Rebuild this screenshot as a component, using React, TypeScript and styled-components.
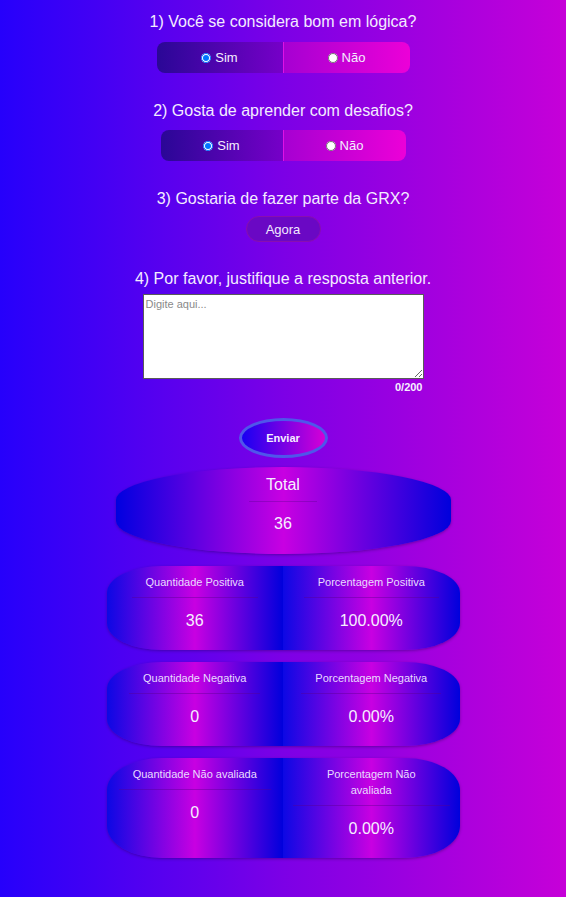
import styled, {createGlobalStyle} from 'styled-components'
import {useState} from 'react'

const GlobalStyle = createGlobalStyle`
  html, body {
    margin: 0;
    min-height: 100%;
  }
  body {
    min-height: 100vh;
    background: linear-gradient(90deg, #2600fb 0%, #7c00e6 50%, #c600d8 100%);
    font-family: "Liberation Sans", Arial, sans-serif;
    color: #f2eaff;
  }
`

interface StatCell {
  label: string
  value: string
}

const stats: [StatCell, StatCell][] = [
  [
    {label: 'Quantidade Positiva', value: '36'},
    {label: 'Porcentagem Positiva', value: '100.00%'},
  ],
  [
    {label: 'Quantidade Negativa', value: '0'},
    {label: 'Porcentagem Negativa', value: '0.00%'},
  ],
  [
    {label: 'Quantidade Não avaliada', value: '0'},
    {label: 'Porcentagem Não avaliada', value: '0.00%'},
  ],
]

const YesNo = ({name, width}: {name: string; width: number}) => (
  <Toggle $width={width}>
    <ToggleOption $side="left">
      <input type="radio" name={name} defaultChecked />
      Sim
    </ToggleOption>
    <ToggleOption $side="right">
      <input type="radio" name={name} />
      Não
    </ToggleOption>
  </Toggle>
)

export default function App() {
  const [text, setText] = useState('')

  return (
    <Page>
      <GlobalStyle />

      <Question $top={0} $gap={11}>1) Você se considera bom em lógica?</Question>
      <YesNo name="logica" width={253} />

      <Question $top={29} $gap={10}>2) Gosta de aprender com desafios?</Question>
      <YesNo name="desafios" width={245} />

      <Question $top={29} $gap={8}>3) Gostaria de fazer parte da GRX?</Question>
      <NowButton type="button">Agora</NowButton>

      <Question $top={28} $gap={6}>4) Por favor, justifique a resposta anterior.</Question>
      <AnswerBox>
        <TextArea
          placeholder="Digite aqui..."
          maxLength={200}
          value={text}
          onChange={(e) => setText(e.target.value)}
        />
        <Counter>{text.length}/200</Counter>
      </AnswerBox>

      <SendButton type="button">Enviar</SendButton>

      <TotalCard>
        <TotalTitle>Total</TotalTitle>
        <TotalValue>36</TotalValue>
      </TotalCard>

      <StatList>
        {stats.map((row) => (
          <StatRow key={row[0].label}>
            {row.map((cell) => (
              <StatHalf key={cell.label}>
                <StatLabel>{cell.label}</StatLabel>
                <StatValue>{cell.value}</StatValue>
              </StatHalf>
            ))}
          </StatRow>
        ))}
      </StatList>
    </Page>
  )
}

const Page = styled.main`
  display: flex;
  flex-direction: column;
  align-items: center;
  padding: 13px 0 40px;
`

const Question = styled.h2<{$top: number; $gap: number}>`
  margin: ${(p) => p.$top}px 0 ${(p) => p.$gap}px;
  font-size: 16px;
  font-weight: 400;
  line-height: 18px;
  color: #f3ecff;
`

const Toggle = styled.div<{$width: number}>`
  display: flex;
  width: ${(p) => p.$width}px;
  height: 31px;
  border-radius: 8px;
  overflow: hidden;
`

const ToggleOption = styled.label<{$side: 'left' | 'right'}>`
  display: flex;
  flex: 1;
  align-items: center;
  justify-content: center;
  gap: 4px;
  font-size: 13px;
  color: #f4eeff;
  cursor: pointer;
  background: ${(p) =>
    p.$side === 'left'
      ? 'linear-gradient(90deg, #2a0796, #7600c8)'
      : 'linear-gradient(90deg, #a600d2, #ec00d8)'};
  border-left: ${(p) => (p.$side === 'right' ? '1px solid #e010e6' : '0')};

  input {
    width: 10px;
    height: 10px;
    margin: 0;
  }
`

const NowButton = styled.button`
  width: 75px;
  height: 26px;
  border: 1px solid #8a0eb0;
  border-radius: 13px;
  background: #6a08c4;
  color: #f2eaff;
  font-family: inherit;
  font-size: 13px;
  cursor: pointer;
`

const AnswerBox = styled.div`
  display: flex;
  flex-direction: column;
  align-items: flex-end;
  width: 281px;
`

const TextArea = styled.textarea`
  box-sizing: border-box;
  width: 281px;
  height: 85px;
  margin: 0;
  padding: 3px 2px;
  border: 1px solid #5a5a5a;
  font-family: "Liberation Sans", Arial, sans-serif;
  font-size: 11px;
  resize: both;

  &::placeholder {
    color: #8a8a8a;
  }
`

const Counter = styled.span`
  margin: 2px 1px 0 0;
  font-size: 11px;
  font-weight: 700;
  line-height: 13px;
  color: #f6f0ff;
`

const SendButton = styled.button`
  box-sizing: border-box;
  width: 89px;
  height: 40px;
  margin-top: 24px;
  border: 3px solid #4f56ea;
  border-radius: 50%;
  background: linear-gradient(90deg, #1800f2, #d600d6);
  color: #f6eeff;
  font-family: inherit;
  font-size: 11px;
  font-weight: 700;
  cursor: pointer;
`

const TotalCard = styled.section`
  display: flex;
  flex-direction: column;
  align-items: center;
  box-sizing: border-box;
  width: 335px;
  height: 87px;
  margin-top: 9px;
  padding-top: 9px;
  border-radius: 50% / 38%;
  background: linear-gradient(90deg, #0000e0, #c800e2 50%, #0000dc);
  box-shadow: 0 1px 3px rgba(40, 0, 90, 0.45);
`

const TotalTitle = styled.h3`
  margin: 0;
  padding: 0 17px 7px;
  border-bottom: 1px solid rgba(90, 0, 140, 0.35);
  font-size: 16px;
  font-weight: 400;
  line-height: 18px;
  color: #f6efff;
`

const TotalValue = styled.p`
  margin: 13px 0 0;
  font-size: 16px;
  line-height: 18px;
  color: #f6efff;
`

const StatList = styled.div`
  display: flex;
  flex-direction: column;
  gap: 12px;
  margin-top: 12px;
`

const StatRow = styled.div`
  display: flex;
  width: 353px;
  min-height: 84px;
  border-radius: 55px / 32%;
  overflow: hidden;
  box-shadow: 0 1px 3px rgba(40, 0, 90, 0.45);
`

const StatHalf = styled.div`
  display: flex;
  flex: 1;
  flex-direction: column;
  align-items: center;
  padding: 8px 0 20px;
  background: linear-gradient(90deg, #0c08e4, #c800e2 50%, #0000dc);
`

const StatLabel = styled.h4`
  box-sizing: border-box;
  max-width: 157px;
  margin: 0;
  padding: 0 14px 7px;
  border-bottom: 1px solid rgba(90, 0, 140, 0.4);
  font-size: 11px;
  font-weight: 400;
  line-height: 16px;
  text-align: center;
  color: #e9dcff;
`

const StatValue = styled.p`
  margin: 14px 0 0;
  font-size: 16px;
  line-height: 18px;
  color: #f6efff;
`
